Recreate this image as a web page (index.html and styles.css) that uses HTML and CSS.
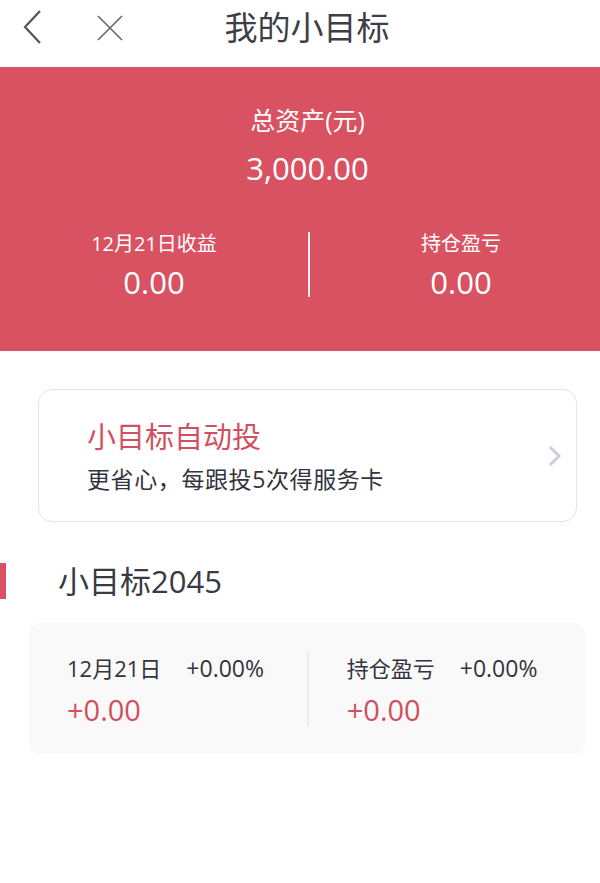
FILE: index.html
```html
<!DOCTYPE html>
<html lang="zh">
<head>
<meta charset="utf-8">
<link rel="stylesheet" href="styles.css">
</head>
<body>
<div class="page">
  <header class="nav">
    <div class="nav-icons">
      <svg class="ic-back" width="22" height="36" viewBox="0 0 22 36"><path d="M18 2 L3 18 L18 34" fill="none" stroke="#555" stroke-width="2.2"/></svg>
      <svg class="ic-close" width="28" height="28" viewBox="0 0 28 28"><path d="M2 2 L26 26 M26 2 L2 26" fill="none" stroke="#666" stroke-width="1.6"/></svg>
    </div>
    <h1 class="nav-title">我的小目标</h1>
  </header>

  <section class="banner">
    <div class="total-label">总资产(元)</div>
    <div class="total-value">3,000.00</div>
    <div class="stats">
      <div class="stat stat-left">
        <div class="stat-label">12月21日收益</div>
        <div class="stat-value">0.00</div>
      </div>
      <div class="stat-divider"></div>
      <div class="stat stat-right">
        <div class="stat-label">持仓盈亏</div>
        <div class="stat-value">0.00</div>
      </div>
    </div>
  </section>

  <div class="promo">
    <div class="promo-text">
      <div class="promo-title">小目标自动投</div>
      <div class="promo-sub">更省心，每跟投5次得服务卡</div>
    </div>
    <svg class="promo-arrow" width="14" height="22" viewBox="0 0 14 22"><path d="M2 2 L11 11 L2 20" fill="none" stroke="#cfcfdc" stroke-width="3"/></svg>
  </div>

  <div class="section-head">
    <span class="section-bar"></span>
    <span class="section-title">小目标2045</span>
  </div>

  <div class="goal-card">
    <div class="goal-col">
      <div class="goal-line"><span class="goal-label">12月21日</span><span class="goal-pct">+0.00%</span></div>
      <div class="goal-value">+0.00</div>
    </div>
    <div class="goal-divider"></div>
    <div class="goal-col goal-col-right">
      <div class="goal-line"><span class="goal-label">持仓盈亏</span><span class="goal-pct">+0.00%</span></div>
      <div class="goal-value">+0.00</div>
    </div>
  </div>
</div>
</body>
</html>
```

FILE: styles.css
```css
* { box-sizing: border-box; margin: 0; padding: 0; }
html, body { background: #fff; }
body {
  font-family: "Open Sans", "Noto Sans CJK SC", sans-serif;
  color: #3a3a46;
}
.page { width: 600px; }

.nav {
  height: 67px;
  display: flex;
  align-items: center;
  justify-content: center;
  position: relative;
}
.nav-icons {
  position: absolute;
  left: 22px;
  top: 9px;
  display: flex;
  align-items: center;
  gap: 52px;
}
.ic-back { display: block; }
.ic-close { display: block; margin-top: 2px; }
.nav-title {
  font-size: 33px;
  font-weight: 400;
  color: #3e3e48;
  line-height: 1;
  margin-top: -12px;
  margin-left: 14px;
}

.banner {
  background: #d95262;
  height: 284px;
  color: #fff;
  display: flex;
  flex-direction: column;
  align-items: center;
  padding-top: 38px;
}
.total-label { font-size: 25px; line-height: 30px; margin-left: 15px; }
.total-value { font-size: 31px; line-height: 40px; margin-top: 13px; margin-left: 15px; }
.stats {
  width: 100%;
  display: flex;
  align-items: center;
  margin-top: 43px;
}
.stat {
  display: flex;
  flex-direction: column;
  align-items: center;
}
.stat-left { width: 308px; }
.stat-right { flex: 1; padding-left: 12px; }
.stat-label { font-size: 20px; line-height: 26px; }
.stat-value { font-size: 31px; line-height: 40px; margin-top: 5px; }
.stat-divider {
  width: 2px;
  height: 65px;
  background: #fff;
  opacity: 0.9;
  margin-top: -4px;
}

.promo {
  margin: 38px 23px 0 38px;
  height: 133px;
  border: 1.5px solid #e4e4ea;
  border-radius: 14px;
  display: flex;
  align-items: center;
  padding: 0 14px 0 48px;
}
.promo-text { flex: 1; }
.promo-title { font-size: 29px; line-height: 40px; color: #d24f60; }
.promo-sub { font-size: 23px; line-height: 32px; color: #33333d; margin-top: 6px; letter-spacing: 0.6px; }

.section-head {
  margin-top: 41px;
  height: 36px;
  display: flex;
  align-items: center;
}
.section-bar { width: 6px; height: 36px; background: #d95262; }
.section-title {
  margin-left: 52px;
  font-size: 31px;
  line-height: 36px;
  color: #3a3a46;
}

.goal-card {
  margin: 24px 15px 0 29px;
  height: 131px;
  background: #f9f9fa;
  border-radius: 10px;
  display: flex;
  align-items: center;
  padding-left: 38px;
}
.goal-col { flex: 1; padding-top: 4px; }
.goal-col-right { padding-left: 38px; }
.goal-line { display: flex; align-items: baseline; gap: 25px; }
.goal-label { font-size: 22px; line-height: 30px; color: #33333d; }
.goal-pct { font-size: 23px; line-height: 30px; color: #33333d; }
.goal-value { font-size: 29px; line-height: 38px; color: #d24f60; margin-top: 8px; }
.goal-divider { width: 1.5px; height: 76px; background: #ececf0; margin-left: 2px; }
```
